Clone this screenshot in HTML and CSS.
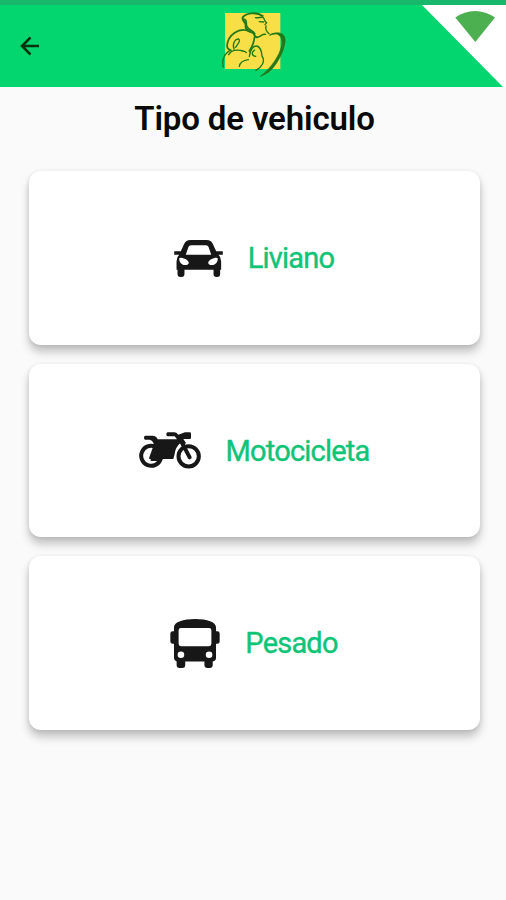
FILE: index.html
```html
<!DOCTYPE html>
<html lang="es">
<head>
    <meta charset="UTF-8">
    <meta name="viewport" content="width=device-width, initial-scale=1.0">
    <title>Tipo de vehiculo</title>
    <link rel="stylesheet" href="styles.css">
</head>
<body>
    <header class="app-bar">
        <svg class="back-icon" viewBox="0 0 20 20">
            <path d="M19 10H2M10.500 1.500L2 10L10.500 18.500"/>
        </svg>

        <svg class="logo" viewBox="50 30 198 204">
            <rect x="62" y="39" width="166" height="168" fill="#f8df48"/>
            <g class="logo-lines">
                <path d="M175 48C157 36 126 38 116 51C110 63 126 65 124 77C122 88 133 94 144 98C153 101 146 108 158 112" stroke-width="6"/>
                <path d="M120 58C130 61 123 72 128 80C132 90 145 91 151 101" stroke-width="5"/>
                <path d="M153 53C162 55 172 49 177 53C182 57 178 63 187 68L182 74M165 65L178 66M185 78C182 89 188 96 194 101"/>
                <path d="M158 112C171 111 171 101 184 103"/>
                <path d="M134 94C105 80 70 105 68 138C69 149 77 150 80 151M151 110C149 127 145 139 135 153" stroke-width="5"/>
                <path d="M89 147C83 130 93 116 103 117C111 122 98 135 94 142"/>
                <path d="M78 151C59 160 52 181 57 201M73 164C80 150 96 149 109 151M109 151C115 154 121 152 126 158M105 199C107 184 119 181 132 179M135 169C138 151 144 137 158 138C169 142 172 155 173 168C184 184 172 202 155 211M151 150C140 157 142 168 154 169"/>
                <path d="M197 105C222 90 246 100 242 126C239 152 222 186 203 207C192 219 181 224 168 229C193 210 213 184 225 158C236 132 236 113 221 102" fill="#227719" stroke-width="2"/>
                <path d="M197 105C207 99 217 99 225 105"/>
            </g>
        </svg>

        <svg class="signal-corner" viewBox="0 0 84 82">
            <path d="M0 0H84V82H81Z" fill="#fff"/>
            <path d="M33.300 12.500C45 3.800 61 3.800 73 12.500L53.300 37Z" fill="#4caf50"/>
        </svg>
    </header>

    <main class="content">
        <h1>Tipo de vehiculo</h1>

        <div class="card">
            <svg class="icon-car" viewBox="27 28 147 112">
                <path fill-rule="evenodd" d="M27 62H47L57 40Q62 28 76 28H125Q139 28 144 40L154 62H174V73H161Q169 80 169 92V118H166V131Q166 140 157 140H155Q146 140 146 131V118H58V131Q58 140 49 140H46Q37 140 37 131V118H34V92Q34 80 42 73H27ZM62 73H139L131 49Q129 44 123 44H78Q72 44 70 49ZM42 83C42 93 48 104 60 104C67 104 71 102 71 97C71 90 56 82 46 82ZM159 83C159 93 153 104 141 104C134 104 130 102 130 97C130 90 145 82 155 82Z"/>
            </svg>
            <span class="label">Liviano</span>
        </div>

        <div class="card">
            <svg class="icon-moto" viewBox="25 38 186 109">
                <path d="M44 48H66Q77 48 81 59H139L132 50H111Q107 50 107 44Q107 38 111 38H131Q137 38 143 45L163 38H177Q181 38 181 42V54Q181 58 177 58H158L166 70L157 78L150 69Q134 82 132 103L128 118H57Q54 118 56 113L70 74Q65 61 57 60H44Q40 60 40 54Q40 48 44 48Z"/>
                <g fill="none" stroke="#171717" stroke-width="12">
                    <path d="M74 81A30 30 0 1 0 90 118H60"/>
                    <circle cx="174" cy="110" r="30.500"/>
                    <path d="M150 62L177 113" stroke-linecap="round"/>
                </g>
            </svg>
            <span class="label">Motocicleta</span>
        </div>

        <div class="card">
            <svg class="icon-bus" viewBox="33 25 149 148">
                <path fill-rule="evenodd" d="M44 62V50C44 34 72 25 108 25C144 25 171 34 171 50V62H175Q182 62 182 69V93Q182 100 175 100H171V143Q171 152 161 153V164Q161 173 152 173H145Q136 173 136 164V153H78V164Q78 173 69 173H61Q52 173 52 164V153Q44 151 44 143V100H40Q33 100 33 93V69Q33 62 40 62ZM65 52Q58 52 58 59V100Q58 107 65 107H150Q157 107 157 100V59Q157 52 150 52ZM65 123A10 10 0 1 0 65 143A10 10 0 1 0 65 123ZM150 123A10 10 0 1 0 150 143A10 10 0 1 0 150 123Z"/>
            </svg>
            <span class="label">Pesado</span>
        </div>
    </main>
</body>
</html>
```
FILE: styles.css
```css
:root {
    --primary: #03d56f;
    --primary-dark: #17b86c;
    --label: #10c477;
}

* {
    box-sizing: border-box;
}

body {
    margin: 0;
    min-height: 100vh;
    background: #fafafa;
    font-family: Roboto, sans-serif;
}

.app-bar {
    display: grid;
    grid-template-columns: 1fr 66px 1fr;
    height: 87px;
    border-top: 5px solid var(--primary-dark);
    background: var(--primary);
}

.back-icon {
    width: 20px;
    height: 20px;
    margin: 31px 0 0 20px;
    fill: none;
    stroke: #07320f;
    stroke-width: 2.5;
}

.logo {
    width: 66px;
    height: 68px;
    margin-top: 5px;
    margin-left: 1px;
}

.logo-lines {
    fill: none;
    stroke: #227719;
    stroke-width: 4;
    stroke-linecap: round;
    stroke-linejoin: round;
}

.signal-corner {
    width: 84px;
    height: 82px;
    justify-self: end;
}

.content {
    display: flex;
    flex-direction: column;
    gap: 19px;
    padding: 0 26px 0 29px;
}

h1 {
    margin: 12px 0 13px;
    color: #090909;
    font-size: 33px;
    font-weight: 600;
    letter-spacing: -0.15px;
    line-height: 40px;
    text-align: center;
}

.card {
    display: flex;
    align-items: center;
    justify-content: center;
    gap: 25px;
    height: 173.500px;
    padding-top: 1px;
    border-radius: 12px;
    background: #fff;
    box-shadow: 0 7px 10px rgba(0, 0, 0, 0.22), 0 1px 5px rgba(0, 0, 0, 0.1);
}

.card svg {
    flex-shrink: 0;
    margin-left: -1px;
    fill: #171717;
}

.icon-car {
    width: 49px;
    height: 37px;
}

.icon-moto {
    width: 62px;
    height: 37px;
}

.icon-bus {
    width: 50px;
    height: 49px;
}

.label {
    color: var(--label);
    font-size: 29px;
    letter-spacing: -0.8px;
    -webkit-text-stroke: 0.4px var(--label);
}
```
